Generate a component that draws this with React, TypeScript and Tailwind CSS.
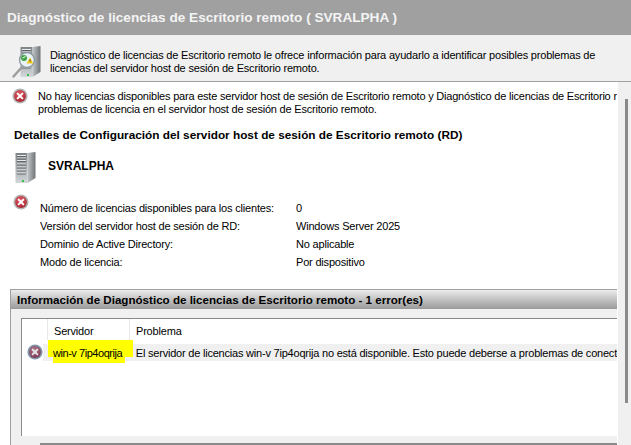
const font = "font-['Liberation_Sans',Arial,sans-serif]";

function ErrorIcon({ faded = false }: { faded?: boolean }) {
  const id = faded ? "err-faded" : "err";
  return (
    <svg width="16" height="16" viewBox="0 0 16 16" aria-hidden className="shrink-0">
      <defs>
        <radialGradient id={id} cx="45%" cy="35%" r="70%">
          <stop offset="0%" stopColor={faded ? "#b0828f" : "#e5626c"} />
          <stop offset="100%" stopColor={faded ? "#7d2f4a" : "#a3202c"} />
        </radialGradient>
      </defs>
      <circle cx="8" cy="8" r="7.6" fill={faded ? "#7f96ad" : "#b4b4b4"} />
      <circle cx="8" cy="8" r="5.9" fill={`url(#${id})`} />
      <path d="M5.6 5.6l4.8 4.8M10.4 5.6l-4.8 4.8" stroke={faded ? "#e6e6ea" : "#fff"} strokeWidth="1.9" strokeLinecap="round" />
    </svg>
  );
}

function ServerIcon({ id }: { id: string }) {
  return (
    <svg width="21" height="32" viewBox="0 0 21 32" aria-hidden className="shrink-0">
      <defs>
        <linearGradient id={id} x1="0" x2="0" y1="0" y2="1">
          <stop offset="0%" stopColor="#7d8386" />
          <stop offset="100%" stopColor="#d3d7d9" />
        </linearGradient>
        <linearGradient id={`${id}-side`} x1="0" x2="1" y1="0" y2="0">
          <stop offset="0%" stopColor="#c2c6c8" />
          <stop offset="100%" stopColor="#6f7478" />
        </linearGradient>
      </defs>
      <path d="M0.5 1h12v30h-12z" fill={`url(#${id})`} />
      <path d="M12.5 1l8-1v26l-8 5z" fill={`url(#${id}-side)`} />
      <path d="M2 3.5h9M2 6h9M2 8.5h9M2 12h9M2 15h9M2 18h9M2 21h9" stroke="#e6e8e9" strokeWidth="1" />
      <path d="M2 4.5h9M2 7h9M2 9.5h9M2 13h9M2 16h9M2 19h9M2 22h9" stroke="#55595c" strokeWidth="0.8" />
      <rect x="7" y="28" width="2" height="2" fill="#37c24a" />
    </svg>
  );
}

function DiagnosticIcon() {
  return (
    <div className="relative h-[32px] w-[29px] shrink-0">
      <div className="absolute right-0 top-0">
        <ServerIcon id="srv-diag" />
      </div>
      <svg width="29" height="32" viewBox="0 0 29 32" aria-hidden className="absolute left-0 top-0">
        <path d="M1.5 30.5l8-9" stroke="#9c9c9c" strokeWidth="2.4" strokeLinecap="round" />
        <circle cx="15" cy="14" r="7.5" fill="#e9f2f7" stroke="#8d9aa3" strokeWidth="1.4" />
        <circle cx="12" cy="12" r="3" fill="#3da642" />
        <path d="M10.5 12l3-1.5" stroke="#fff" strokeWidth="1" />
        <path d="M18 11.5l3.4 6h-6.8z" fill="#f0c419" />
        <path d="M18 13.5v2" stroke="#333" strokeWidth="0.9" />
      </svg>
    </div>
  );
}

const rows = [
  ["Número de licencias disponibles para los clientes:", "0"],
  ["Versión del servidor host de sesión de RD:", "Windows Server 2025"],
  ["Dominio de Active Directory:", "No aplicable"],
  ["Modo de licencia:", "Por dispositivo"],
];

export default function App() {
  return (
    <div className={`${font} flex h-[445px] w-[631px] flex-col overflow-hidden bg-white text-[11px] leading-[13px] tracking-[-0.19px] text-black`}>
      <div className="flex h-[35px] shrink-0 items-center bg-[#a0a0a0] pl-[7px] text-[13.6px] font-bold tracking-normal text-[#f4f4f4]">
        Diagnóstico de licencias de Escritorio remoto ( SVRALPHA )
      </div>

      <div className="flex h-[47px] shrink-0 items-start gap-[9px] border-b border-[#a0a0a0] bg-[#f0f0f0] pl-[12px] pt-[11px]">
        <DiagnosticIcon />
        <p className="whitespace-nowrap pt-[3px]">
          Diagnóstico de licencias de Escritorio remoto le ofrece información para ayudarlo a identificar posibles problemas de
          <br />
          licencias del servidor host de sesión de Escritorio remoto.
        </p>
      </div>

      <div className="flex min-h-0 flex-1">
        <div className="flex w-[617px] shrink-0 flex-col overflow-hidden">
          <div className="flex gap-[10px] pl-[12px] pt-[6px]">
            <ErrorIcon />
            <p className="whitespace-nowrap pt-[2px] tracking-[-0.21px]">
              No hay licencias disponibles para este servidor host de sesión de Escritorio remoto y Diagnóstico de licencias de Escritorio r
              <br />
              problemas de licencia en el servidor host de sesión de Escritorio remoto.
            </p>
          </div>

          <h2 className="mt-[12px] pl-[14px] text-[11.8px] font-bold leading-[14px] tracking-normal">
            Detalles de Configuración del servidor host de sesión de Escritorio remoto (RD)
          </h2>

          <div className="mt-[10px] flex items-center gap-[12px] pl-[15px]">
            <ServerIcon id="srv-main" />
            <span className="pb-[4px] text-[12px] font-bold tracking-normal">SVRALPHA</span>
          </div>

          <div className="mt-[10px] flex pl-[13px]">
            <ErrorIcon />
            <div className="ml-[11px] mt-[8px] grid grid-cols-[256px_auto] gap-y-[5px] whitespace-nowrap">
              {rows.map(([label, value]) => (
                <div key={label} className="contents">
                  <span>{label}</span>
                  <span>{value}</span>
                </div>
              ))}
            </div>
          </div>

          <section className="ml-[10px] mt-[20px] flex min-h-0 flex-1 flex-col border-l border-t border-[#a0a0a0] bg-[#f0f0f0]">
            <h3 className="flex h-[19px] shrink-0 items-center bg-gradient-to-b from-[#ececec] to-[#9a9a9a] pl-[6px] text-[11.6px] font-bold tracking-normal">
              Información de Diagnóstico de licencias de Escritorio remoto - 1 error(es)
            </h3>
            <div className="ml-[10px] mt-[9px] h-[118px] shrink-0 border-l border-t border-[#8a8a8a] bg-white">
              <div className="flex h-[25px] pl-[25px]">
                <div className="h-[21px] w-[83px] border-x border-[#e8e8e8] pl-[6px] pt-[6px]">Servidor</div>
                <div className="pl-[6px] pt-[6px]">Problema</div>
              </div>
              <div className="relative ml-[21px] flex h-[17px] items-center whitespace-nowrap bg-[#f0f0f0] pt-[1px]">
                <span className="absolute left-[-16px] top-0">
                  <ErrorIcon faded />
                </span>
                <span className="absolute left-[5px] top-[-4px] h-[17px] w-[85px] bg-[#ffff00]" />
                <span className="absolute left-[10px] top-0 h-[19px] w-[72px] bg-[#ffff00]" />
                <div className="relative w-[86px] pl-[10px] tracking-[-0.45px]">win-v 7ip4oqrija</div>
                <div className="relative pl-[7.5px] tracking-[-0.21px]">
                  El servidor de licencias win-v 7ip4oqrija no está disponible. Esto puede deberse a problemas de conect
                </div>
              </div>
            </div>
            <div className="ml-[29px] mt-[7px] h-[2px] bg-[#8a8a8a]" />
          </section>
        </div>

        <div className="ml-[1px] flex flex-1 justify-start bg-[#f0f0f0] pl-[7px] pt-[17px]">
          <div className="h-[304px] w-[3px] bg-[#8a8a8a]" />
        </div>
      </div>
    </div>
  );
}
